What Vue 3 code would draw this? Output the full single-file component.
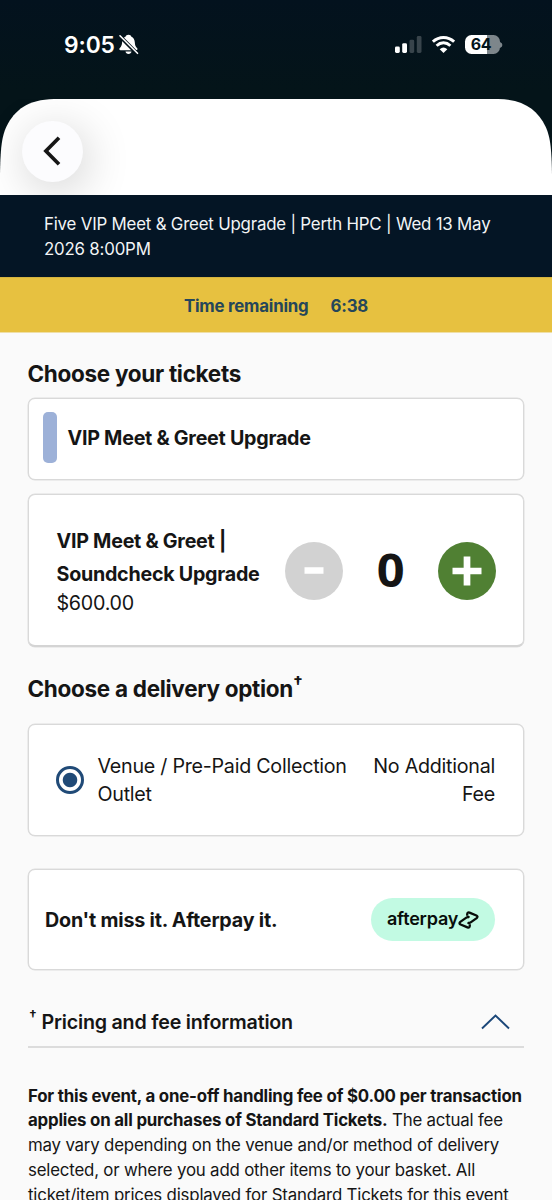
<script setup>
import { ref } from 'vue'

const quantity = ref(0)
const event = 'Five VIP Meet & Greet Upgrade | Perth HPC | Wed 13 May 2026 8:00PM'
</script>

<template>
  <div class="screen">
    <header class="top">
      <div class="status">
        <span class="clock">9:05</span>
        <svg class="bell" width="20" height="21" viewBox="0 0 20 21">
          <path d="M9.5 .7c-1.700 0-2.500.8-2.800 1.700C4.300 3.500 3.300 5.600 3.100 8.300c-.2 2.900-.7 4.100-2.500 5.900-.5.7-.3 2 .9 2h15.800c1.200 0 1.500-1.300.9-2-1.800-1.700-2.200-3-2.400-5.900-.2-2.700-1.300-4.800-3.600-5.900-.3-.9-1-1.700-2.700-1.700zM6.500 17.400h6c-.2 1.600-1.400 2.500-3 2.500s-2.800-.9-3-2.500z" fill="#fff" />
          <path d="M0 1.400L18.800 20.200" stroke="#04121b" stroke-width="3.800" />
          <path d="M1 1.800L18.500 19.300" stroke="#fff" stroke-width="1.600" stroke-linecap="round" />
        </svg>
        <svg class="signal" width="27" height="17" viewBox="0 0 27 17">
          <rect x="0" y="10.500" width="4.800" height="6.500" rx="1.400" fill="#fff" />
          <rect x="7.200" y="7.200" width="4.800" height="9.800" rx="1.400" fill="#fff" />
          <rect x="14.500" y="3.700" width="4.700" height="13.300" rx="1.400" fill="#38444b" />
          <rect x="21.800" y="0" width="4.700" height="17" rx="1.400" fill="#38444b" />
        </svg>
        <svg class="wifi" width="23" height="17" viewBox="0 0 23 17">
          <g fill="none" stroke="#fff" stroke-width="2.900">
            <path d="M.9 5.700Q5.500 1.500 11.500 1.500T22.100 5.700" />
            <path d="M4.600 9.700Q7.700 6.800 11.500 6.800T18.400 9.700" />
          </g>
          <path d="M7.700 13.200Q11.500 10 15.300 13.200L11.500 16.900Z" fill="#fff" />
        </svg>
        <span class="battery"><span class="level">64</span></span>
        <svg class="nub" width="3" height="6" viewBox="0 0 3 6"><path d="M0 0Q2.400 1 2.400 3T0 6Z" fill="#7d868b" /></svg>
      </div>
      <div class="sheet">
        <svg class="sheet-shape" width="552" height="96" viewBox="0 0 552 96">
          <path d="M0 96V76C.4 51 1.500 38 6.500 27.500C14.500 11 28 .5 54 0H498C524 .5 537.500 11 545.500 27.500C550.500 38 551.600 51 552 76V96Z" fill="#fff" />
        </svg>
        <button class="back" aria-label="Back">
          <svg width="18" height="30" viewBox="0 0 18 30"><path d="M16 1.800L2.900 15L16 28.200" fill="none" stroke="#161616" stroke-width="3.700" /></svg>
        </button>
      </div>
    </header>

    <div class="event">{{ event }}</div>
    <div class="timer"><span class="timer-label">Time remaining</span><span>6:38</span></div>

    <main>
      <h2 class="tickets-title">Choose your tickets</h2>
      <section class="card category">
        <i class="swatch"></i>
        <span class="category-name">VIP Meet &amp; Greet Upgrade</span>
      </section>

      <section class="card ticket">
        <div class="ticket-info">
          <div class="ticket-name">VIP Meet &amp; Greet |<br />Soundcheck Upgrade</div>
          <div class="price">$600.00</div>
        </div>
        <button class="round minus" aria-label="Remove ticket" @click="quantity = Math.max(0, quantity - 1)">
          <svg width="30" height="30" viewBox="0 0 30 30"><path d="M5.500 14.500H24.500" stroke="#fff" stroke-width="6.500" /></svg>
        </button>
        <span class="quantity">{{ quantity }}</span>
        <button class="round plus" aria-label="Add ticket" @click="quantity++">
          <svg width="30" height="30" viewBox="0 0 30 30"><path d="M.5 15H29.500M15 .5V29.500" stroke="#fff" stroke-width="6.700" /></svg>
        </button>
      </section>

      <h2 class="delivery-title">Choose a delivery option<span class="dagger">†</span></h2>
      <section class="card delivery">
        <i class="radio"></i>
        <div class="outlet">Venue / Pre-Paid Collection<br />Outlet</div>
        <div class="fee">No Additional<br />Fee</div>
      </section>

      <section class="card afterpay">
        <span class="afterpay-text">Don't miss it. Afterpay it.</span>
        <span class="badge">
          <span class="wordmark">afterpay</span>
          <svg class="loop" width="21" height="18" viewBox="0 0 21 18">
            <g fill="none" stroke="#080d0a" stroke-width="2.300" stroke-linejoin="round">
              <path d="M9.200 4.800V3.200Q9.300 .9 11.500 1.600L18.400 4.500Q20.400 5.700 18.700 7.100L12.300 11.600Q10.700 12.500 9.800 11.300" />
              <path d="M11.800 13.200V14.800Q11.700 17.100 9.500 16.400L2.600 13.500Q.6 12.300 2.300 10.900L8.700 6.400Q10.300 5.500 11.200 6.700" />
            </g>
          </svg>
        </span>
      </section>

      <div class="accordion">
        <span class="small-dagger">†</span>
        <span class="accordion-title">Pricing and fee information</span>
        <svg class="caret" width="29" height="16" viewBox="0 0 29 16"><path d="M1 14.500L14.500 1.500L28 14.500" fill="none" stroke="#1b4779" stroke-width="1.900" /></svg>
      </div>

      <p class="terms">
        <b>For this event, a one-off handling fee of $0.00 per transaction</b><br />
        <b>applies on all purchases of Standard Tickets.</b> The actual fee<br />
        may vary depending on the venue and/or method of delivery<br />
        selected, or where you add other items to your basket. All<br />
        ticket/item prices displayed for Standard Tickets for this event
      </p>
    </main>
  </div>
</template>

<style>
body {
  margin: 0;
  background: #fafafa;
}
</style>

<style scoped>
.screen {
  width: 552px;
  height: 1200px;
  overflow: hidden;
  background: #fafafa;
  color: #151515;
  font-family: Inter, "Liberation Sans", sans-serif;
}
.screen * {
  box-sizing: border-box;
}
button {
  border: 0;
  padding: 0;
  display: flex;
  align-items: center;
  justify-content: center;
}
.top {
  height: 195px;
  background: linear-gradient(#03121e, #041419 90px, #041419);
}
.status {
  height: 99px;
  padding: 0 49px 10px 64px;
  display: flex;
  align-items: center;
  color: #fff;
}
.clock {
  width: 51px;
  font-size: 22.800px;
  font-weight: 600;
  letter-spacing: -0.1px;
  white-space: nowrap;
}
.bell {
  margin-left: 4px;
}
.signal {
  margin-left: auto;
}
.wifi {
  margin-left: 10px;
}
.battery {
  width: 35px;
  height: 19px;
  margin-left: 10px;
  border-radius: 6.500px;
  background: linear-gradient(90deg, #fff 64%, #7d868b 64%);
}
.level {
  display: block;
  padding-right: 2px;
  text-align: center;
  font-size: 16px;
  line-height: 19px;
  font-weight: 700;
  letter-spacing: -0.3px;
  color: #04141b;
}
.nub {
  margin-left: 0.5px;
}
.sheet {
  position: relative;
  height: 96px;
  padding: 21.500px 22px;
  overflow: hidden;
}
.sheet-shape {
  position: absolute;
  left: 0;
  top: 0;
}
.back {
  position: relative;
  width: 61px;
  height: 61px;
  padding-right: 2px;
  border-radius: 50%;
  background: #fcfcfe;
  box-shadow: 4px 8px 46px rgba(0, 0, 0, 0.19);
}
.event {
  height: 82px;
  padding: 16.500px 44px 0;
  background: #041525;
  color: #f2f4f6;
  font-size: 16.850px;
  letter-spacing: -0.2px;
  line-height: 25px;
}
.timer {
  height: 56px;
  border-top: 1px solid #d5b440;
  border-bottom: 1px solid #efdfa6;
  display: flex;
  align-items: center;
  justify-content: center;
  gap: 22px;
  padding-top: 2px;
  background: #e7c140;
  color: #25465a;
  font-size: 16.850px;
  letter-spacing: -0.21px;
  font-weight: 700;
}
main {
  padding: 26px 28px 0;
  letter-spacing: -0.26px;
}
h2 {
  margin: 0 0 0 -0.5px;
  height: 30px;
  font-size: 22.500px;
  line-height: 30px;
  font-weight: 700;
  letter-spacing: -0.3px;
  white-space: nowrap;
}
.card {
  border: 1.500px solid #d9d9d9;
  border-radius: 7px;
  box-shadow: 0 0 0 0.5px #dedede;
  background: #fff;
  display: flex;
  align-items: center;
}
.category {
  height: 82px;
  margin-top: 9px;
  padding: 0 13.500px;
}
.swatch {
  width: 14px;
  height: 51px;
  margin-bottom: 4px;
  border-radius: 5px;
  background: #9db1d8;
}
.category-name {
  margin: 0 0 2px 11px;
  font-size: 19.700px;
  font-weight: 700;
}
.ticket {
  height: 153px;
  margin-top: 14px;
  border-bottom: 2px solid #d4d4d4;
  padding: 0 27.500px;
}
.ticket-info {
  width: 228px;
}
.ticket-name {
  font-size: 19.700px;
  font-weight: 700;
  line-height: 33px;
  white-space: nowrap;
}
.price {
  font-size: 19.700px;
  line-height: 24px;
}
.round {
  flex: none;
  width: 58px;
  height: 58px;
  margin-top: 1px;
  border-radius: 50%;
}
.minus {
  background: #d2d2d2;
}
.plus {
  background: #508033;
}
.quantity {
  width: 95px;
  margin-bottom: 3px;
  text-align: center;
  font-family: "Open Sans", sans-serif;
  font-size: 46px;
  line-height: 58px;
  font-weight: 700;
  transform: scaleX(1.06);
}
.delivery-title {
  margin-top: 27px;
}
.dagger {
  position: relative;
  top: -8px;
  font-size: 17px;
}
.delivery {
  height: 112px;
  margin-top: 20px;
  padding: 0 28px 0 27px;
  font-size: 19.700px;
  line-height: 28px;
  white-space: nowrap;
}
.radio {
  width: 28px;
  height: 28px;
  border: 3px solid #204a77;
  border-radius: 50%;
  background: radial-gradient(circle, #204a77 6.800px, #fff 7.700px);
}
.outlet {
  margin-left: 13.500px;
}
.fee {
  margin-left: auto;
  text-align: right;
}
.afterpay {
  height: 101px;
  margin-top: 33px;
  padding: 0 28px 0 16px;
}
.afterpay-text {
  font-size: 19.700px;
  font-weight: 700;
  letter-spacing: -0.2px;
}
.badge {
  width: 124px;
  height: 43px;
  margin-left: auto;
  border-radius: 22px;
  background: #c2fae3;
  display: flex;
  align-items: center;
  padding-left: 16px;
}
.wordmark {
  width: 71px;
  padding-bottom: 2px;
  color: #080d0a;
  font-size: 18px;
  font-weight: 600;
  letter-spacing: -0.22px;
  white-space: nowrap;
}
.loop {
  flex: none;
}
.accordion {
  height: 78px;
  border-bottom: 2px solid #dcdcdc;
  display: flex;
  align-items: center;
  padding: 27px 14px 0 1px;
}
.small-dagger {
  width: 12.500px;
  margin-bottom: 13px;
  font-size: 14px;
  font-weight: 600;
}
.accordion-title {
  font-size: 19.700px;
  font-weight: 600;
  letter-spacing: -0.22px;
}
.caret {
  margin-left: auto;
}
.terms {
  margin: 35.500px 0 0;
  font-size: 16.850px;
  letter-spacing: -0.195px;
  line-height: 24.800px;
  white-space: nowrap;
}
</style>
